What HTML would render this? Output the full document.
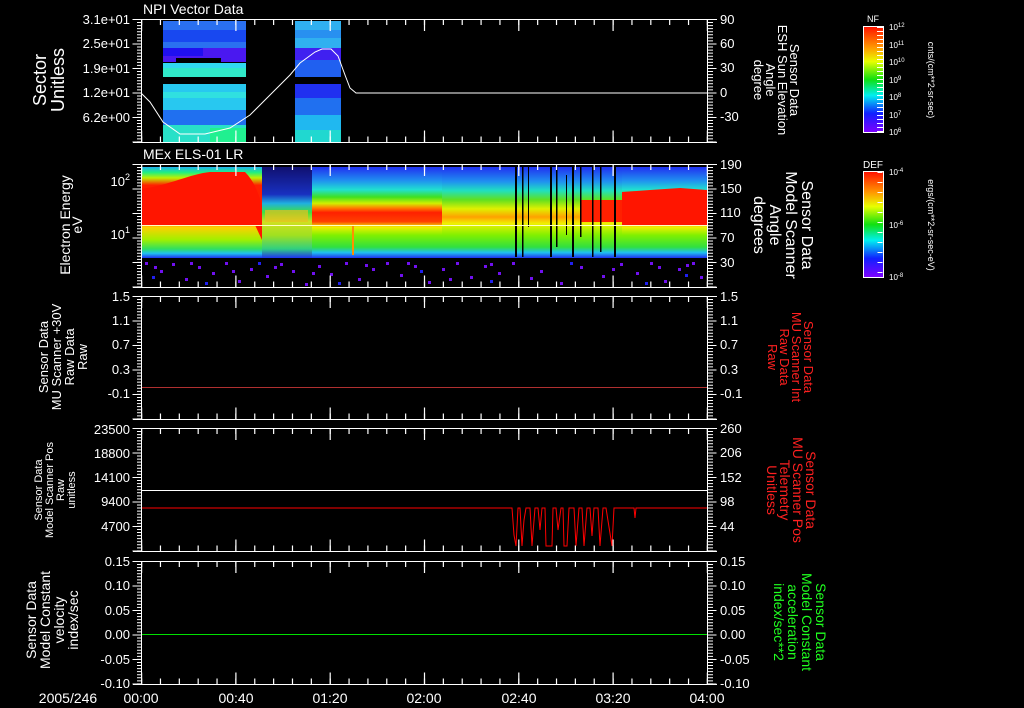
<!DOCTYPE html>
<html><head><meta charset="utf-8"><style>
html,body{margin:0;padding:0;background:#000;width:1024px;height:708px;overflow:hidden}
svg{display:block}
text{font-family:"Liberation Sans",sans-serif;fill:#fff}
</style></head><body>
<svg width="1024" height="708" viewBox="0 0 1024 708" xmlns="http://www.w3.org/2000/svg">
<defs>
<linearGradient id="cb" x1="0" y1="0" x2="0" y2="1">
<stop offset="0" stop-color="#ff1000"/><stop offset="0.2" stop-color="#ff9a00"/><stop offset="0.33" stop-color="#e8ff00"/><stop offset="0.5" stop-color="#10e010"/><stop offset="0.65" stop-color="#00f0f0"/><stop offset="0.82" stop-color="#1020ff"/><stop offset="1" stop-color="#8000ff"/>
</linearGradient>
<linearGradient id="gL" x1="0" y1="167" x2="0" y2="258" gradientUnits="userSpaceOnUse">
<stop offset="0" stop-color="#20b0f0"/><stop offset="0.06" stop-color="#20f080"/><stop offset="0.12" stop-color="#c0f000"/><stop offset="0.2" stop-color="#ff2000"/><stop offset="0.6" stop-color="#ff1800"/><stop offset="0.66" stop-color="#ffd000"/><stop offset="0.8" stop-color="#a0f000"/><stop offset="0.9" stop-color="#30e060"/><stop offset="0.95" stop-color="#20c0f0"/><stop offset="1" stop-color="#2030f0"/>
</linearGradient>
<linearGradient id="gM" x1="0" y1="167" x2="0" y2="258" gradientUnits="userSpaceOnUse">
<stop offset="0" stop-color="#2030f0"/><stop offset="0.15" stop-color="#2090f0"/><stop offset="0.25" stop-color="#20e0d0"/><stop offset="0.33" stop-color="#40e020"/><stop offset="0.4" stop-color="#d0f000"/><stop offset="0.45" stop-color="#ff8000"/><stop offset="0.5" stop-color="#ff2000"/><stop offset="0.6" stop-color="#ff4000"/><stop offset="0.66" stop-color="#f0f000"/><stop offset="0.75" stop-color="#80f000"/><stop offset="0.88" stop-color="#30e040"/><stop offset="0.94" stop-color="#20c0f0"/><stop offset="1" stop-color="#2030f0"/>
</linearGradient>
<linearGradient id="gM2" x1="0" y1="167" x2="0" y2="258" gradientUnits="userSpaceOnUse">
<stop offset="0" stop-color="#2030f0"/><stop offset="0.16" stop-color="#2090f0"/><stop offset="0.26" stop-color="#20e0c0"/><stop offset="0.36" stop-color="#60e020"/><stop offset="0.46" stop-color="#e0f000"/><stop offset="0.55" stop-color="#ffa000"/><stop offset="0.62" stop-color="#f0f000"/><stop offset="0.75" stop-color="#80f000"/><stop offset="0.88" stop-color="#30e040"/><stop offset="0.94" stop-color="#20c0f0"/><stop offset="1" stop-color="#2030f0"/>
</linearGradient>
<linearGradient id="gD" x1="0" y1="167" x2="0" y2="258" gradientUnits="userSpaceOnUse">
<stop offset="0" stop-color="#101070"/><stop offset="0.3" stop-color="#1830c0"/><stop offset="0.4" stop-color="#20b0e0"/><stop offset="0.5" stop-color="#40e040"/><stop offset="0.6" stop-color="#d0e020"/><stop offset="0.75" stop-color="#a0e020"/><stop offset="0.9" stop-color="#30d080"/><stop offset="1" stop-color="#2030f0"/>
</linearGradient>
<g id="frame" stroke="#fff" fill="none">
<line x1="133" y1="0.5" x2="717" y2="0.5"/>
<line x1="133" y1="123.5" x2="717" y2="123.5"/>
<line x1="141.5" y1="0" x2="141.5" y2="124"/>
<line x1="707.5" y1="0" x2="707.5" y2="124"/>
<line x1="141" y1="3" x2="708" y2="3" stroke-width="6" stroke-dasharray="1.2 17.66"/>
<line x1="141" y1="120.5" x2="708" y2="120.5" stroke-width="6" stroke-dasharray="1.2 17.66"/>
<line x1="141" y1="6" x2="708" y2="6" stroke-width="12" stroke-dasharray="1.2 93.1"/>
<line x1="141" y1="117.5" x2="708" y2="117.5" stroke-width="12" stroke-dasharray="1.2 93.1"/>
<line x1="139.5" y1="0" x2="139.5" y2="124" stroke-width="5" stroke-dasharray="1 2.06"/>
<line x1="710.5" y1="0" x2="710.5" y2="124" stroke-width="5" stroke-dasharray="1 2.06"/>
<line x1="137" y1="0" x2="137" y2="124" stroke-width="9" stroke-dasharray="1 23.5"/>
<line x1="712" y1="0" x2="712" y2="124" stroke-width="9" stroke-dasharray="1 23.5"/>
</g>
</defs>

<!-- Panel 1 images -->
<rect x="163" y="21" width="83" height="27" fill="#2a70f0"/>
<rect x="163" y="30" width="83" height="12" fill="#1848f0"/>
<rect x="163" y="48" width="83" height="14" fill="#4a18f0"/>
<rect x="163" y="48" width="40" height="8" fill="#2010f0"/>
<rect x="176" y="58" width="45" height="5" fill="#000"/>
<rect x="163" y="63" width="83" height="5" fill="#30d8f0"/>
<rect x="163" y="68" width="83" height="9" fill="#30e8c8"/>
<rect x="163" y="84" width="83" height="26" fill="#28c8f0"/>
<rect x="163" y="92" width="83" height="6" fill="#30e0e0"/>
<rect x="163" y="110" width="83" height="15" fill="#2070f0"/>
<rect x="163" y="125" width="83" height="17" fill="#28e0c8"/>
<rect x="210" y="128" width="36" height="14" fill="#20f090"/>
<rect x="295" y="21" width="46" height="27" fill="#30b0f0"/>
<rect x="295" y="30" width="46" height="8" fill="#2890f0"/>
<rect x="295" y="48" width="46" height="12" fill="#4020f0"/>
<rect x="295" y="60" width="46" height="17" fill="#2060f0"/>
<rect x="295" y="84" width="46" height="14" fill="#2030f0"/>
<rect x="295" y="98" width="46" height="17" fill="#2070f0"/>
<rect x="295" y="115" width="46" height="27" fill="#20b8f0"/>
<rect x="295" y="130" width="46" height="12" fill="#20d8d0"/>
<path d="M141,93 L150,102 L163,122 L180,134 L205,134 L230,128 L250,115 L270,95 L290,75 L300,63 L315,52 L322,49 L331,49 L338,56 L345,75 L350,88 L356,93 L707,93" stroke="#fff" fill="none" stroke-width="1"/>

<!-- Panel 2 spectrogram -->
<rect x="141" y="167" width="122" height="91" fill="url(#gL)"/>
<path d="M141,189 C170,185 190,174 210,172 L245,172 C258,185 262,205 266,222 L268,250 L262,240 L255,225 L141,225 Z" fill="#ff1500"/>
<rect x="262" y="167" width="50" height="91" fill="url(#gD)"/>
<path d="M265,210 L308,210 L308,222 L265,222Z" fill="#e8c020" opacity="0.7"/>
<rect x="312" y="167" width="130" height="91" fill="url(#gM)"/>
<rect x="442" y="167" width="72" height="91" fill="url(#gM2)"/>
<rect x="514" y="167" width="108" height="91" fill="url(#gM2)"/>
<rect x="580" y="200" width="42" height="22" fill="#ff2000"/>
<rect x="622" y="167" width="86" height="91" fill="url(#gM)"/>
<path d="M622,192 L650,190 L680,188 L707,190 L707,225 L622,225Z" fill="#ff1500"/>
<g fill="#000">
<rect x="515" y="167" width="2" height="90"/><rect x="522" y="167" width="1.5" height="90"/><rect x="550" y="167" width="2" height="90"/><rect x="556" y="167" width="1.5" height="80"/><rect x="572" y="167" width="2" height="90"/><rect x="580" y="167" width="1.5" height="70"/><rect x="592" y="167" width="1.5" height="90"/><rect x="600" y="167" width="1.5" height="85"/><rect x="614" y="167" width="2" height="90"/><rect x="528" y="167" width="1" height="60"/><rect x="566" y="175" width="1" height="60"/>
</g>
<rect x="352" y="225" width="2" height="30" fill="#ff9000"/>
<line x1="141" y1="225.5" x2="707" y2="225.5" stroke="#ffffc0" stroke-width="1"/>
<g fill="#7010f0">
<rect x="145" y="262" width="3" height="3"/><rect x="160" y="270" width="3" height="3"/><rect x="172" y="263" width="3" height="3"/><rect x="185" y="278" width="3" height="3"/><rect x="198" y="266" width="3" height="3"/><rect x="212" y="272" width="3" height="3"/><rect x="225" y="262" width="3" height="3"/><rect x="238" y="280" width="3" height="3"/><rect x="250" y="268" width="3" height="3"/><rect x="266" y="275" width="3" height="3"/><rect x="280" y="263" width="3" height="3"/><rect x="292" y="270" width="3" height="3"/><rect x="305" y="283" width="3" height="3"/><rect x="318" y="265" width="3" height="3"/><rect x="330" y="273" width="3" height="3"/><rect x="345" y="262" width="3" height="3"/><rect x="358" y="278" width="3" height="3"/><rect x="372" y="268" width="3" height="3"/><rect x="386" y="262" width="3" height="3"/><rect x="400" y="274" width="3" height="3"/><rect x="414" y="265" width="3" height="3"/><rect x="428" y="281" width="3" height="3"/><rect x="442" y="268" width="3" height="3"/><rect x="456" y="262" width="3" height="3"/><rect x="470" y="276" width="3" height="3"/><rect x="484" y="265" width="3" height="3"/><rect x="498" y="272" width="3" height="3"/><rect x="512" y="262" width="3" height="3"/><rect x="540" y="270" width="3" height="3"/><rect x="560" y="282" width="3" height="3"/><rect x="580" y="266" width="3" height="3"/><rect x="602" y="275" width="3" height="3"/><rect x="620" y="263" width="3" height="3"/><rect x="636" y="272" width="3" height="3"/><rect x="650" y="262" width="3" height="3"/><rect x="664" y="280" width="3" height="3"/><rect x="678" y="268" width="3" height="3"/><rect x="692" y="262" width="3" height="3"/><rect x="700" y="276" width="3" height="3"/>
<rect x="154" y="266" width="3" height="3"/><rect x="190" y="262" width="3" height="3"/><rect x="232" y="270" width="3" height="3"/><rect x="274" y="266" width="3" height="3"/><rect x="312" y="272" width="3" height="3"/><rect x="365" y="264" width="3" height="3"/><rect x="407" y="262" width="3" height="3"/><rect x="449" y="278" width="3" height="3"/><rect x="490" y="263" width="3" height="3"/><rect x="530" y="277" width="3" height="3"/><rect x="612" y="268" width="3" height="3"/><rect x="658" y="266" width="3" height="3"/><rect x="686" y="264" width="3" height="3"/>
</g>
<g fill="#2020f0">
<rect x="152" y="276" width="3" height="3"/><rect x="205" y="282" width="3" height="3"/><rect x="258" y="262" width="3" height="3"/><rect x="338" y="282" width="3" height="3"/><rect x="420" y="270" width="3" height="3"/><rect x="490" y="280" width="3" height="3"/><rect x="570" y="262" width="3" height="3"/><rect x="645" y="282" width="3" height="3"/><rect x="685" y="274" width="3" height="3"/>
</g>

<!-- Panel 3-5 lines -->
<line x1="141" y1="387.5" x2="707" y2="387.5" stroke="#b03030"/>
<line x1="141" y1="490.5" x2="707" y2="490.5" stroke="#fff"/>
<path d="M141,508 L512,508 L514,535 L516,546 L518,508 L520,508 L522,546 L524,520 L526,508 L530,508 L532,546 L535,508 L538,508 L540,530 L542,508 L545,508 L546,546 L552,546 L553,508 L556,508 L558,530 L561,508 L563,508 L564,546 L567,546 L569,508 L574,508 L576,546 L579,508 L582,508 L584,546 L587,508 L590,508 L592,536 L594,508 L598,508 L600,546 L603,508 L606,508 L612,546 L614,508 L634,508 L635,518 L636,508 L707,508" stroke="#ff0000" fill="none"/>
<line x1="141" y1="634.5" x2="707" y2="634.5" stroke="#00e000"/>

<!-- Frames -->
<use href="#frame" x="0" y="19"/>
<use href="#frame" x="0" y="164"/>
<use href="#frame" x="0" y="296"/>
<use href="#frame" x="0" y="428"/>
<use href="#frame" x="0" y="561"/>

<!-- Titles -->
<text x="143" y="14" font-size="14">NPI Vector Data</text>
<text x="143" y="159" font-size="14">MEx ELS-01 LR</text>

<!-- Left tick labels -->
<g font-size="13" text-anchor="end">
<text x="130" y="24">3.1e+01</text><text x="130" y="48">2.5e+01</text><text x="130" y="73">1.9e+01</text><text x="130" y="97">1.2e+01</text><text x="130" y="122">6.2e+00</text>
<text x="130" y="186">10<tspan font-size="9" dy="-6">2</tspan></text><text x="130" y="239">10<tspan font-size="9" dy="-6">1</tspan></text>
<text x="130" y="301">1.5</text><text x="130" y="325">1.1</text><text x="130" y="349">0.7</text><text x="130" y="374">0.3</text><text x="130" y="398">-0.1</text>
<text x="130" y="434">23500</text><text x="130" y="458">18800</text><text x="130" y="482">14100</text><text x="130" y="506">9400</text><text x="130" y="531">4700</text>
<text x="130" y="566">0.15</text><text x="130" y="590">0.10</text><text x="130" y="615">0.05</text><text x="130" y="639">0.00</text><text x="130" y="664">-0.05</text><text x="130" y="688">-0.10</text>
</g>
<!-- Right tick labels -->
<g font-size="13">
<text x="720" y="24">90</text><text x="720" y="48">60</text><text x="720" y="72">30</text><text x="720" y="97">0</text><text x="720" y="121">-30</text>
<text x="720" y="169">190</text><text x="720" y="193">150</text><text x="720" y="217">110</text><text x="720" y="242">70</text><text x="720" y="267">30</text>
<text x="720" y="301">1.5</text><text x="720" y="325">1.1</text><text x="720" y="349">0.7</text><text x="720" y="374">0.3</text><text x="720" y="398">-0.1</text>
<text x="720" y="433">260</text><text x="720" y="457">206</text><text x="720" y="482">152</text><text x="720" y="506">98</text><text x="720" y="531">44</text>
<text x="720" y="566">0.15</text><text x="720" y="590">0.10</text><text x="720" y="615">0.05</text><text x="720" y="639">0.00</text><text x="720" y="664">-0.05</text><text x="720" y="688">-0.10</text>
</g>
<!-- Time labels -->
<g font-size="14" text-anchor="middle">
<text x="68" y="703">2005/246</text>
<text x="141" y="703">00:00</text><text x="236" y="703">00:40</text><text x="330" y="703">01:20</text><text x="424" y="703">02:00</text><text x="519" y="703">02:40</text><text x="613" y="703">03:20</text><text x="707" y="703">04:00</text>
</g>

<!-- Left axis titles -->
<g text-anchor="middle">
<text transform="translate(46,80) rotate(-90)" font-size="18"><tspan x="0" y="0">Sector</tspan><tspan x="0" y="18">Unitless</tspan></text>
<text transform="translate(70,225) rotate(-90)" font-size="14"><tspan x="0" y="0">Electron Energy</tspan><tspan x="0" y="12">eV</tspan></text>
<text transform="translate(48,357) rotate(-90)" font-size="13"><tspan x="0" y="0">Sensor Data</tspan><tspan x="0" y="13">MU Scanner +30V</tspan><tspan x="0" y="26">Raw Data</tspan><tspan x="0" y="39">Raw</tspan></text>
<text transform="translate(42,490) rotate(-90)" font-size="11"><tspan x="0" y="0">Sensor Data</tspan><tspan x="0" y="11">Model Scanner Pos</tspan><tspan x="0" y="22">Raw</tspan><tspan x="0" y="33">unitless</tspan></text>
<text transform="translate(36,620) rotate(-90)" font-size="14"><tspan x="0" y="0">Sensor Data</tspan><tspan x="0" y="14">Model Constant</tspan><tspan x="0" y="28">velocity</tspan><tspan x="0" y="42">index/sec</tspan></text>
</g>
<!-- Right axis titles -->
<g text-anchor="middle">
<text transform="translate(790,80) rotate(90)" font-size="13"><tspan x="0" y="0">Sensor Data</tspan><tspan x="0" y="12">ESH Sun Elevation</tspan><tspan x="0" y="24">Angle</tspan><tspan x="0" y="36">degree</tspan></text>
<text transform="translate(802,225) rotate(90)" font-size="16"><tspan x="0" y="0">Sensor Data</tspan><tspan x="0" y="16">Model Scanner</tspan><tspan x="0" y="32">Angle</tspan><tspan x="0" y="48">degrees</tspan></text>
<text transform="translate(804,357) rotate(90)" font-size="13" style="fill:#ff2020"><tspan x="0" y="0">Sensor Data</tspan><tspan x="0" y="12">MU Scanner Int</tspan><tspan x="0" y="24">Raw Data</tspan><tspan x="0" y="36">Raw</tspan></text>
<text transform="translate(806,490) rotate(90)" font-size="14" style="fill:#ff2020"><tspan x="0" y="0">Sensor Data</tspan><tspan x="0" y="13">MU Scanner Pos</tspan><tspan x="0" y="26">Telemetry</tspan><tspan x="0" y="39">Unitless</tspan></text>
<text transform="translate(816,622) rotate(90)" font-size="14" style="fill:#20ff20"><tspan x="0" y="0">Sensor Data</tspan><tspan x="0" y="14">Model Constant</tspan><tspan x="0" y="28">acceleration</tspan><tspan x="0" y="42">index/sec**2</tspan></text>
</g>

<!-- Colorbars -->
<rect x="863.5" y="26.5" width="20" height="106" fill="url(#cb)" stroke="#fff"/>
<rect x="863.5" y="171.5" width="20" height="106" fill="url(#cb)" stroke="#fff"/>
<line x1="880" y1="27" x2="880" y2="132" stroke="#fff" stroke-width="6" stroke-dasharray="1 3"/>
<line x1="880" y1="172" x2="880" y2="277" stroke="#fff" stroke-width="5" stroke-dasharray="1 9"/>
<text x="873" y="22" font-size="9" text-anchor="middle">NF</text>
<text x="873" y="168" font-size="10" text-anchor="middle">DEF</text>
<g font-size="8">
<text x="889" y="30">10<tspan font-size="6" dy="-3">12</tspan></text>
<text x="889" y="48">10<tspan font-size="6" dy="-3">11</tspan></text>
<text x="889" y="65">10<tspan font-size="6" dy="-3">10</tspan></text>
<text x="889" y="83">10<tspan font-size="6" dy="-3">9</tspan></text>
<text x="889" y="100">10<tspan font-size="6" dy="-3">8</tspan></text>
<text x="889" y="118">10<tspan font-size="6" dy="-3">7</tspan></text>
<text x="889" y="135">10<tspan font-size="6" dy="-3">6</tspan></text>
<text x="889" y="175">10<tspan font-size="6" dy="-3">-4</tspan></text>
<text x="889" y="228">10<tspan font-size="6" dy="-3">-6</tspan></text>
<text x="889" y="280">10<tspan font-size="6" dy="-3">-8</tspan></text>
</g>
<text transform="translate(928,80) rotate(90)" font-size="9" text-anchor="middle">cnts/(cm**2-sr-sec)</text>
<text transform="translate(928,225) rotate(90)" font-size="9" text-anchor="middle">ergs/(cm**2-sr-sec-eV)</text>
</svg>
</body></html>
